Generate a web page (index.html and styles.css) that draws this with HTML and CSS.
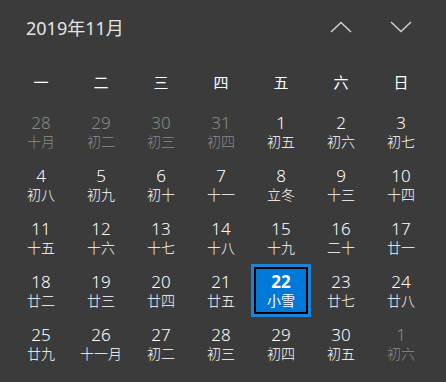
FILE: index.html
```html
<!DOCTYPE html>
<html lang="zh-CN">
<head>
<meta charset="utf-8">
<link rel="stylesheet" href="styles.css">
</head>
<body>
<div class="cal">
  <div class="head">
    <div class="title">2019年11月</div>
    <div class="nav">
      <button class="btn" aria-label="上一月"><svg width="22" height="12" viewBox="0 0 22 12"><path d="M1 11 L11 1.5 L21 11" fill="none" stroke="#d0d0d0" stroke-width="1.5"/></svg></button>
      <button class="btn" aria-label="下一月"><svg width="22" height="12" viewBox="0 0 22 12"><path d="M1 1 L11 10.5 L21 1" fill="none" stroke="#d0d0d0" stroke-width="1.5"/></svg></button>
    </div>
  </div>
  <div class="week">
    <span>一</span><span>二</span><span>三</span><span>四</span><span>五</span><span>六</span><span>日</span>
  </div>
  <div class="grid">
    <div class="day other"><span class="n">28</span><span class="l">十月</span></div>
    <div class="day other"><span class="n">29</span><span class="l">初二</span></div>
    <div class="day other"><span class="n">30</span><span class="l">初三</span></div>
    <div class="day other"><span class="n">31</span><span class="l">初四</span></div>
    <div class="day"><span class="n">1</span><span class="l">初五</span></div>
    <div class="day"><span class="n">2</span><span class="l">初六</span></div>
    <div class="day"><span class="n">3</span><span class="l">初七</span></div>

    <div class="day"><span class="n">4</span><span class="l">初八</span></div>
    <div class="day"><span class="n">5</span><span class="l">初九</span></div>
    <div class="day"><span class="n">6</span><span class="l">初十</span></div>
    <div class="day"><span class="n">7</span><span class="l">十一</span></div>
    <div class="day"><span class="n">8</span><span class="l">立冬</span></div>
    <div class="day"><span class="n">9</span><span class="l">十三</span></div>
    <div class="day"><span class="n">10</span><span class="l">十四</span></div>

    <div class="day"><span class="n">11</span><span class="l">十五</span></div>
    <div class="day"><span class="n">12</span><span class="l">十六</span></div>
    <div class="day"><span class="n">13</span><span class="l">十七</span></div>
    <div class="day"><span class="n">14</span><span class="l">十八</span></div>
    <div class="day"><span class="n">15</span><span class="l">十九</span></div>
    <div class="day"><span class="n">16</span><span class="l">二十</span></div>
    <div class="day"><span class="n">17</span><span class="l">廿一</span></div>

    <div class="day"><span class="n">18</span><span class="l">廿二</span></div>
    <div class="day"><span class="n">19</span><span class="l">廿三</span></div>
    <div class="day"><span class="n">20</span><span class="l">廿四</span></div>
    <div class="day"><span class="n">21</span><span class="l">廿五</span></div>
    <div class="day today"><span class="n">22</span><span class="l">小雪</span></div>
    <div class="day"><span class="n">23</span><span class="l">廿七</span></div>
    <div class="day"><span class="n">24</span><span class="l">廿八</span></div>

    <div class="day"><span class="n">25</span><span class="l">廿九</span></div>
    <div class="day"><span class="n">26</span><span class="l">十一月</span></div>
    <div class="day"><span class="n">27</span><span class="l">初二</span></div>
    <div class="day"><span class="n">28</span><span class="l">初三</span></div>
    <div class="day"><span class="n">29</span><span class="l">初四</span></div>
    <div class="day"><span class="n">30</span><span class="l">初五</span></div>
    <div class="day other"><span class="n">1</span><span class="l">初六</span></div>

    <div class="day other"><span class="n">2</span><span class="l">初七</span></div>
    <div class="day other"><span class="n">3</span><span class="l">初八</span></div>
    <div class="day other"><span class="n">4</span><span class="l">初九</span></div>
    <div class="day other"><span class="n">5</span><span class="l">初十</span></div>
    <div class="day other"><span class="n">6</span><span class="l">十一</span></div>
    <div class="day other"><span class="n">7</span><span class="l">大雪</span></div>
    <div class="day other"><span class="n">8</span><span class="l">十三</span></div>
  </div>
</div>
</body>
</html>
```
FILE: styles.css
```css
html, body {
  margin: 0;
  padding: 0;
  background: #3b3b3b;
  overflow: hidden;
}
.cal {
  width: 446px;
  height: 382px;
  overflow: hidden;
  font-family: "Noto Sans", "Noto Sans CJK SC", sans-serif;
  color: #fff;
}
.head {
  height: 60px;
  display: flex;
  align-items: center;
  justify-content: space-between;
  padding: 0 15px 6px 26px;
  box-sizing: border-box;
}
.title {
  font-size: 18px;
  color: #e4e4e4;
}
.nav {
  display: flex;
}
.btn {
  width: 60px;
  height: 40px;
  background: none;
  border: 0;
  padding: 0;
  display: flex;
  align-items: center;
  justify-content: center;
}
.week {
  display: grid;
  grid-template-columns: repeat(7, 60px);
  margin-left: 11px;
  height: 45px;
  align-items: center;
  font-family: "Noto Sans CJK SC", sans-serif;
  font-size: 15px;
  padding-bottom: 2px;
  box-sizing: border-box;
}
.week span {
  text-align: center;
}
.grid {
  display: grid;
  grid-template-columns: repeat(7, 60px);
  grid-auto-rows: 53px;
  margin-left: 11px;
}
.day {
  display: flex;
  flex-direction: column;
  align-items: center;
  justify-content: center;
  padding-bottom: 1px;
  box-sizing: border-box;
}
.n {
  font-size: 17px;
  line-height: 20px;
  font-weight: 300;
}
.l {
  font-family: "Noto Sans CJK SC", sans-serif;
  font-size: 14px;
  line-height: 16px;
  font-weight: 300;
}
.other {
  color: #8a8a8a;
}
.today {
  background: #0078d7;
  box-shadow: inset 0 0 0 3px #1a84d8, inset 0 0 0 5px #000;
}
.today .n {
  font-weight: 700;
}
.today .l {
  font-weight: 400;
}
```
